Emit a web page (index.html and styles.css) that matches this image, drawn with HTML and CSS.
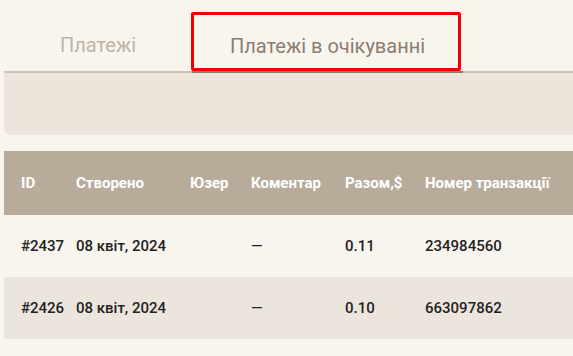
FILE: index.html
```html
<!DOCTYPE html>
<html lang="uk">
<head>
<meta charset="utf-8">
<title>Платежі</title>
<link rel="stylesheet" href="styles.css">
</head>
<body>
<div class="page">
  <nav class="tabs">
    <a class="tab">Платежі</a>
    <a class="tab tab--active">Платежі в очікуванні<span class="tab__mark"></span></a>
  </nav>

  <div class="filters"></div>

  <div class="table">
    <div class="row row--head">
      <div class="cell">ID</div>
      <div class="cell">Створено</div>
      <div class="cell">Юзер</div>
      <div class="cell">Коментар</div>
      <div class="cell">Разом,$</div>
      <div class="cell">Номер транзакції</div>
    </div>
    <div class="row">
      <div class="cell">#2437</div>
      <div class="cell">08 квіт, 2024</div>
      <div class="cell"></div>
      <div class="cell">—</div>
      <div class="cell">0.11</div>
      <div class="cell">234984560</div>
    </div>
    <div class="row row--alt">
      <div class="cell">#2426</div>
      <div class="cell">08 квіт, 2024</div>
      <div class="cell"></div>
      <div class="cell">—</div>
      <div class="cell">0.10</div>
      <div class="cell">663097862</div>
    </div>
  </div>
</div>
</body>
</html>
```

FILE: styles.css
```css
html, body {
  margin: 0;
  padding: 0;
  background: #f8f5ef;
  font-family: Roboto, "Noto Sans", sans-serif;
  overflow: hidden;
}

.page {
  padding-left: 4px;
}

/* tab strip */
.tabs {
  display: flex;
  height: 71px;
  border-bottom: 2px solid #cdc2b5;
}

.tab {
  position: relative;
  display: flex;
  align-items: center;
  justify-content: center;
  padding-top: 19px;
  box-sizing: border-box;
  font-size: 20px;
  color: #c1b3a4;
  height: 100%;
}

.tab:first-child {
  width: 188px;
}

.tab--active {
  width: 271px;
  color: #8c7d6f;
  border-bottom: 2px solid #8f7a66;
  margin-bottom: -2px;
  height: 73px;
  padding-top: 21px;
}

.tab__mark {
  position: absolute;
  left: -1px;
  top: 12px;
  width: 270px;
  height: 59px;
  box-sizing: border-box;
  border: 3px solid #f00000;
  border-radius: 2px;
}

/* filter panel */
.filters {
  height: 62px;
  background: #ede5dc;
  border-bottom-left-radius: 7px;
  margin-bottom: 16px;
}

/* payments table */
.row {
  display: grid;
  grid-template-columns: 55px 114px 61px 94px 80px 1fr;
  align-items: center;
  height: 62px;
  padding-left: 17px;
  font-size: 15px;
  font-weight: 500;
  color: #222;
}

.row--head {
  height: 64px;
  background: #b9ab9a;
  color: #fff;
  font-weight: 700;
}

.row--alt {
  background: #ece5de;
}

.cell {
  white-space: nowrap;
}
```
